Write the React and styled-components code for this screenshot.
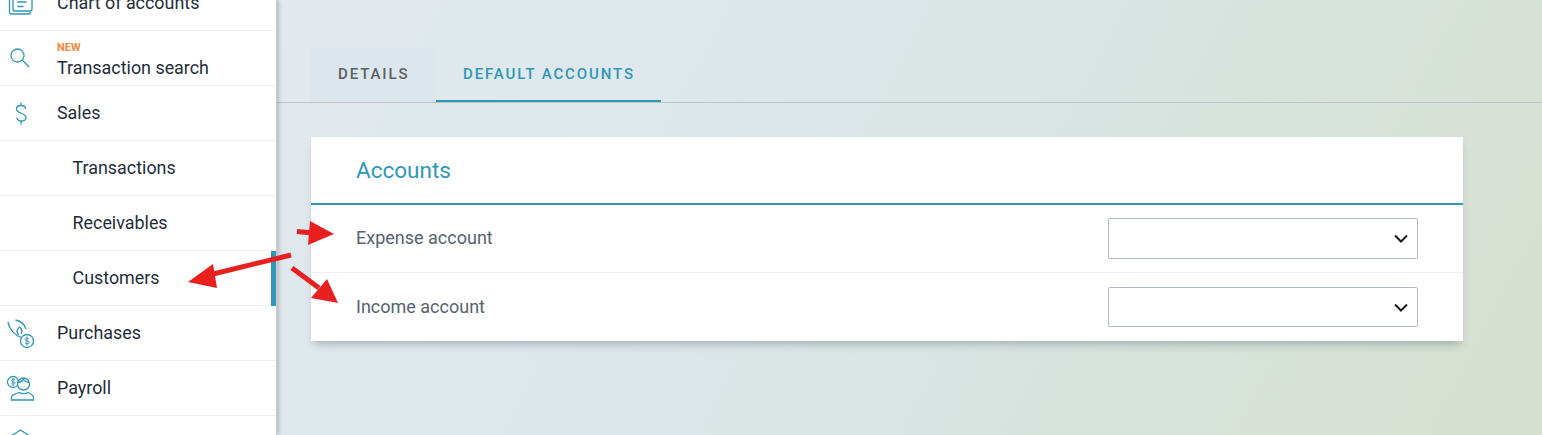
import React from 'react';
import styled, { createGlobalStyle } from 'styled-components';

const GlobalStyle = createGlobalStyle`
    html, body {
        margin: 0;
        height: 100%;
        overflow: hidden;
    }
    body {
        font-family: Roboto, "Liberation Sans", sans-serif;
    }
    * {
        box-sizing: border-box;
    }
`;

const teal = '#2f97b7';

const ChartIcon = () => (
    <svg width="34" height="34" viewBox="0 0 34 34" fill="none" stroke={teal} strokeWidth="1.3">
        <path d="M13 0v23a2 2 0 0 0 2 2h15a2 2 0 0 0 2-2V0" />
        <path d="M9.500 8v18a2 2 0 0 0 2 2h17a2 2 0 0 0 2-2" />
        <path d="M17.500 16h9M17.500 20.500h6" />
    </svg>
);

const SearchIcon = () => (
    <svg width="34" height="34" viewBox="0 0 34 34" fill="none" stroke={teal} strokeWidth="1.3">
        <circle cx="17.500" cy="14.500" r="6.500" />
        <path d="M22.300 19l6.700 7" />
    </svg>
);

const DollarIcon = () => (
    <svg width="34" height="34" viewBox="0 0 34 34" fill="none" stroke={teal} strokeWidth="1.3">
        <path d="M25.500 13c0-2.200-2-3.500-4.500-3.500s-4.500 1.400-4.500 3.500c0 5 9.500 3.500 9.500 8.500 0 2.200-2 3.500-4.500 3.500s-4.500-1.300-4.500-3.500" />
        <path d="M21 6.500v3M21 25v3.500" />
    </svg>
);

const PurchasesIcon = () => (
    <svg width="34" height="34" viewBox="0 0 34 34" fill="none" stroke={teal} strokeWidth="1.300">
        <path d="M8 6c1 7 7 14 15 16" />
        <path d="M15.500 4c5 1 9 4 10.500 9" />
        <path d="M18.500 19c-2-3-1.500-6 1-8 2.500 2 3 4.500 1.500 7" />
        <circle cx="27" cy="25" r="6.500" fill="#fff" />
        <path d="M29 23c-1-1-4-1-4 .7s4 1 4 2.800-3 1.700-4 .5M27 20.500v9" strokeWidth="1" />
    </svg>
);

const PayrollIcon = () => (
    <svg width="34" height="34" viewBox="0 0 34 34" fill="none" stroke={teal} strokeWidth="1.300">
        <circle cx="13" cy="11" r="5.500" />
        <path d="M15 9c-1-1-3.500-1-3.500.5s3.500 1 3.500 2.500-2.500 1.500-3.500.5M13 7v8" strokeWidth="1" />
        <circle cx="23.500" cy="13" r="6" fill="#fff" />
        <path d="M17.500 11.500c3 0 4.500-1 6-3 1 1.500 2.500 2.500 5.500 3" />
        <path d="M11.500 29v-2.500c0-2.500 3-3.500 8-5 2 1.500 6.500 1.500 8.500 0 3.500 1.500 5.500 2.500 5.500 5V29h-22z" />
    </svg>
);

const BankIcon = () => (
    <svg width="34" height="34" viewBox="0 0 34 34" fill="none" stroke={teal} strokeWidth="1.300">
        <path d="M12 9.500l8.500-5.500 8.500 5.500V30H12V9.500z" />
    </svg>
);

const navItems = [
    { id: 'chart', label: 'Chart of accounts', icon: <ChartIcon /> },
    { id: 'search', label: 'Transaction search', icon: <SearchIcon />, isNew: true },
    { id: 'sales', label: 'Sales', icon: <DollarIcon /> },
    { id: 'transactions', label: 'Transactions', sub: true },
    { id: 'receivables', label: 'Receivables', sub: true },
    { id: 'customers', label: 'Customers', sub: true, active: true },
    { id: 'purchases', label: 'Purchases', icon: <PurchasesIcon /> },
    { id: 'payroll', label: 'Payroll', icon: <PayrollIcon /> },
    { id: 'more', label: '', icon: <BankIcon /> },
];

const App = () => {
    return (
        <Page>
            <GlobalStyle />
            <Sidebar>
                <NavList>
                    {navItems.map((item) => (
                        <NavRow key={item.id} $sub={item.sub} $active={item.active}>
                            {item.icon && <IconSlot>{item.icon}</IconSlot>}
                            <NavText $tagged={item.isNew}>
                                {item.isNew && <NewTag>NEW</NewTag>}
                                <NavLabel>{item.label}</NavLabel>
                            </NavText>
                        </NavRow>
                    ))}
                </NavList>
            </Sidebar>

            <Main>
                <Tabs>
                    <Tab>DETAILS</Tab>
                    <Tab $active>DEFAULT ACCOUNTS</Tab>
                </Tabs>

                <Card>
                    <CardHeader>Accounts</CardHeader>
                    <FormRow>
                        <FieldLabel>Expense account</FieldLabel>
                        <SelectBox $height={41}>
                            <Chevron />
                        </SelectBox>
                    </FormRow>
                    <FormRow $last>
                        <FieldLabel>Income account</FieldLabel>
                        <SelectBox $height={40}>
                            <Chevron />
                        </SelectBox>
                    </FormRow>
                </Card>
            </Main>

            {/* 스크린샷 위에 그려진 빨간 화살표 */}
            <Arrows width="1542" height="435" viewBox="0 0 1542 435">
                <path d="M297 231.500l16 1.500" stroke="#e8201f" strokeWidth="5" />
                <polygon points="310,221 334,234 308,245" fill="#e8201f" />
                <path d="M291 255l-82 20" stroke="#e8201f" strokeWidth="5" />
                <polygon points="213,264 188,282 217,288" fill="#e8201f" />
                <path d="M292 268l27 20" stroke="#e8201f" strokeWidth="5" />
                <polygon points="327,279 338,303 311,298" fill="#e8201f" />
            </Arrows>
        </Page>
    );
};

const Chevron = () => (
    <ChevronSvg width="14" height="9" viewBox="0 0 14 9" fill="none" stroke="#1c1c1c" strokeWidth="2">
        <path d="M1 1.500l6 6 6-6" />
    </ChevronSvg>
);

const Page = styled.div`
    position: relative;
    display: flex;
    width: 1542px;
    height: 435px;
    overflow: hidden;
    background: linear-gradient(118deg, #e5ebee 0%, #dde7ec 40%, #d9e4e2 65%, #d5dfcf 100%);
`;

const Sidebar = styled.aside`
    flex: 0 0 277px;
    height: 435px;
    overflow: hidden;
    background: #fff;
    border-right: 1px solid #c9ced1;
    box-shadow: 2px 0 4px rgba(60, 70, 80, 0.28);
    z-index: 1;
`;

const NavList = styled.nav`
    display: flex;
    flex-direction: column;
    margin-top: -24px;
`;

const NavRow = styled.div`
    position: relative;
    flex: 0 0 55px;
    display: flex;
    align-items: center;
    padding-left: ${(props) => (props.$sub ? '72.500px' : '0')};
    border-bottom: 1px solid #edeff0;
    ${(props) => props.$active && `
        &::after {
            content: '';
            position: absolute;
            top: 0;
            right: 0;
            width: 5px;
            height: 55px;
            background: ${teal};
        }
    `}
`;

const IconSlot = styled.span`
    flex: 0 0 57px;
    height: 34px;
    display: flex;
    align-items: center;
`;

const NavText = styled.div`
    display: flex;
    flex-direction: column;
    padding-top: ${(props) => (props.$tagged ? '5px' : '0')};
`;

const NewTag = styled.span`
    font-size: 11px;
    line-height: 12px;
    font-weight: 700;
    color: #f5873a;
    margin-bottom: 3px;
`;

const NavLabel = styled.span`
    font-size: 17.900px;
    line-height: 22px;
    color: #1f2d3a;
`;

const Main = styled.main`
    flex: 1;
    padding-top: 48px;
    min-width: 0;
`;

const Tabs = styled.div`
    display: flex;
    height: 55px;
    padding-left: 34px;
    border-bottom: 1px solid #bfc4c8;
`;

const Tab = styled.div`
    width: ${(props) => (props.$active ? '225px' : '125px')};
    height: 54px;
    padding-left: 27px;
    display: flex;
    align-items: center;
    font-size: 15px;
    font-weight: 500;
    letter-spacing: 1.880px;
    color: ${(props) => (props.$active ? teal : '#5c5f63')};
    background: ${(props) => (props.$active ? 'transparent' : 'rgba(200, 222, 232, 0.22)')};
    border-bottom: 2px solid ${(props) => (props.$active ? teal : 'transparent')};
`;

const Card = styled.section`
    width: 1152px;
    margin: 34px 0 0 34px;
    background: #fff;
    box-shadow: 0 6px 8px -3px rgba(60, 80, 90, 0.35);
`;

const CardHeader = styled.h2`
    margin: 0;
    height: 68px;
    padding: 0 45px;
    display: flex;
    align-items: center;
    font-size: 22.500px;
    font-weight: 400;
    color: ${teal};
    border-bottom: 2px solid ${teal};
`;

const FormRow = styled.div`
    height: 68px;
    padding: 0 45px;
    display: flex;
    align-items: center;
    justify-content: space-between;
    border-bottom: ${(props) => (props.$last ? 'none' : '1px solid #edeff0')};
`;

const FieldLabel = styled.span`
    font-size: 18px;
    color: #56636f;
    margin-bottom: 2px;
`;

const SelectBox = styled.div`
    width: 310px;
    height: ${(props) => props.$height}px;
    display: flex;
    align-items: center;
    justify-content: flex-end;
    padding-right: 9px;
    border: 1px solid #b4bbc2;
    border-radius: 2px;
    background: #fff;
`;

const ChevronSvg = styled.svg`
    display: block;
`;

const Arrows = styled.svg`
    position: absolute;
    top: 0;
    left: 0;
    z-index: 2;
    pointer-events: none;
`;

export default App;
